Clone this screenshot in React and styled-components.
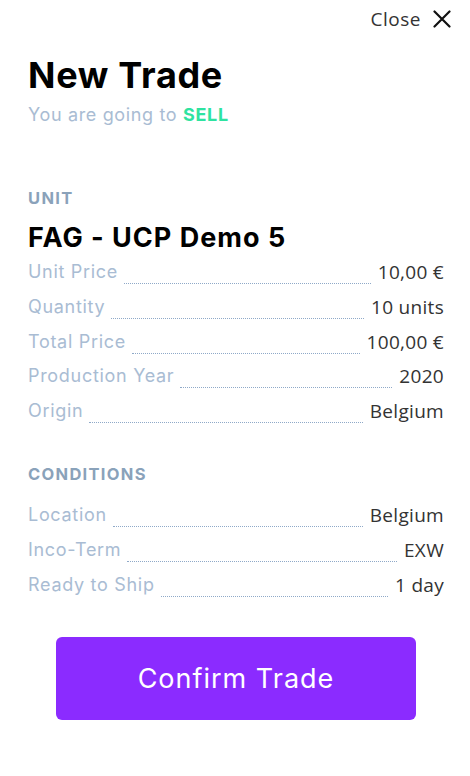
import React from 'react';
import styled, { createGlobalStyle } from 'styled-components';

const GlobalStyle = createGlobalStyle`
    body {
        margin: 0;
        background: #ffffff;
        font-family: Inter, "Open Sans", sans-serif;
    }
`;

const Panel = styled.div`
    width: 470px;
    height: 776px;
    box-sizing: border-box;
    padding: 7px 26px 0 28px;
    display: flex;
    flex-direction: column;
`;

const TopBar = styled.div`
    display: flex;
    justify-content: flex-end;
    margin-right: -7px;
`;

const CloseButton = styled.button`
    display: flex;
    align-items: center;
    gap: 12px;
    background: none;
    border: none;
    padding: 0;
    font-family: "Open Sans", sans-serif;
    font-size: 19px;
    letter-spacing: 0.5px;
    line-height: 24px;
    color: #333;
    cursor: pointer;
`;

const CloseIcon = () => (
    <svg width="18" height="18" viewBox="0 0 18 18" fill="none">
        <path d="M1.5 1.5 L16.5 16.5 M16.5 1.5 L1.5 16.5" stroke="#111" strokeWidth="2.2" strokeLinecap="round" />
    </svg>
);

const Title = styled.h1`
    margin: 22px 0 0;
    font-size: 36px;
    font-weight: 700;
    letter-spacing: 0.7px;
    color: #000;
    line-height: 44px;
`;

const Subtitle = styled.p`
    margin: 6px 0 0;
    font-size: 18px;
    letter-spacing: 0.65px;
    color: #a9bcd3;
    line-height: 24px;
`;

const Side = styled.span`
    color: #2ee3a0;
    font-weight: 700;
`;

const SectionLabel = styled.h3`
    margin: ${props => props.$top}px 0 0;
    font-size: 16.5px;
    font-weight: 700;
    letter-spacing: 1.3px;
    color: #8aa2ba;
    line-height: 22px;
`;

const UnitName = styled.h2`
    margin: 13px 0 0;
    font-size: 27px;
    font-weight: 700;
    letter-spacing: 1px;
    color: #000;
    line-height: 32px;
`;

const Rows = styled.div`
    display: flex;
    flex-direction: column;
    gap: 10.75px;
    margin-top: ${props => props.$top}px;
`;

const Row = styled.div`
    display: flex;
    align-items: flex-end;
    height: 24px;
`;

const Label = styled.span`
    font-size: 18px;
    letter-spacing: 0.7px;
    color: #a9bcd3;
    line-height: 24px;
    white-space: nowrap;
`;

const Leader = styled.span`
    flex: 1;
    margin: 0 7px 0 6px;
    border-bottom: 1px dotted #8fa9c8;
`;

const Value = styled.span`
    font-family: "Open Sans", sans-serif;
    font-size: 19px;
    letter-spacing: 0.3px;
    color: #333;
    line-height: 24px;
    white-space: nowrap;
`;

const ConfirmButton = styled.button`
    align-self: center;
    margin-top: 40px;
    width: 360px;
    height: 83px;
    border: none;
    border-radius: 6px;
    background: #8b2bff;
    color: #fff;
    font-family: Inter, sans-serif;
    font-size: 27px;
    letter-spacing: 1px;
    cursor: pointer;
`;

const unitRows = [
    ['Unit Price', '10,00 €'],
    ['Quantity', '10 units'],
    ['Total Price', '100,00 €'],
    ['Production Year', '2020'],
    ['Origin', 'Belgium'],
];

const conditionRows = [
    ['Location', 'Belgium'],
    ['Inco-Term', 'EXW'],
    ['Ready to Ship', '1 day'],
];

const DetailRows = ({ rows, top }) => (
    <Rows $top={top}>
        {rows.map(([label, value]) => (
            <Row key={label}>
                <Label>{label}</Label>
                <Leader />
                <Value>{value}</Value>
            </Row>
        ))}
    </Rows>
);

const App = () => (
    <>
        <GlobalStyle />
        <Panel>
            <TopBar>
                <CloseButton>
                    Close <CloseIcon />
                </CloseButton>
            </TopBar>
            <Title>New Trade</Title>
            <Subtitle>
                You are going to <Side>SELL</Side>
            </Subtitle>
            <SectionLabel $top={60}>UNIT</SectionLabel>
            <UnitName>FAG - UCP Demo 5</UnitName>
            <DetailRows rows={unitRows} top={6} />
            <SectionLabel $top={40}>CONDITIONS</SectionLabel>
            <DetailRows rows={conditionRows} top={18} />
            <ConfirmButton>Confirm Trade</ConfirmButton>
        </Panel>
    </>
);

export default App;
